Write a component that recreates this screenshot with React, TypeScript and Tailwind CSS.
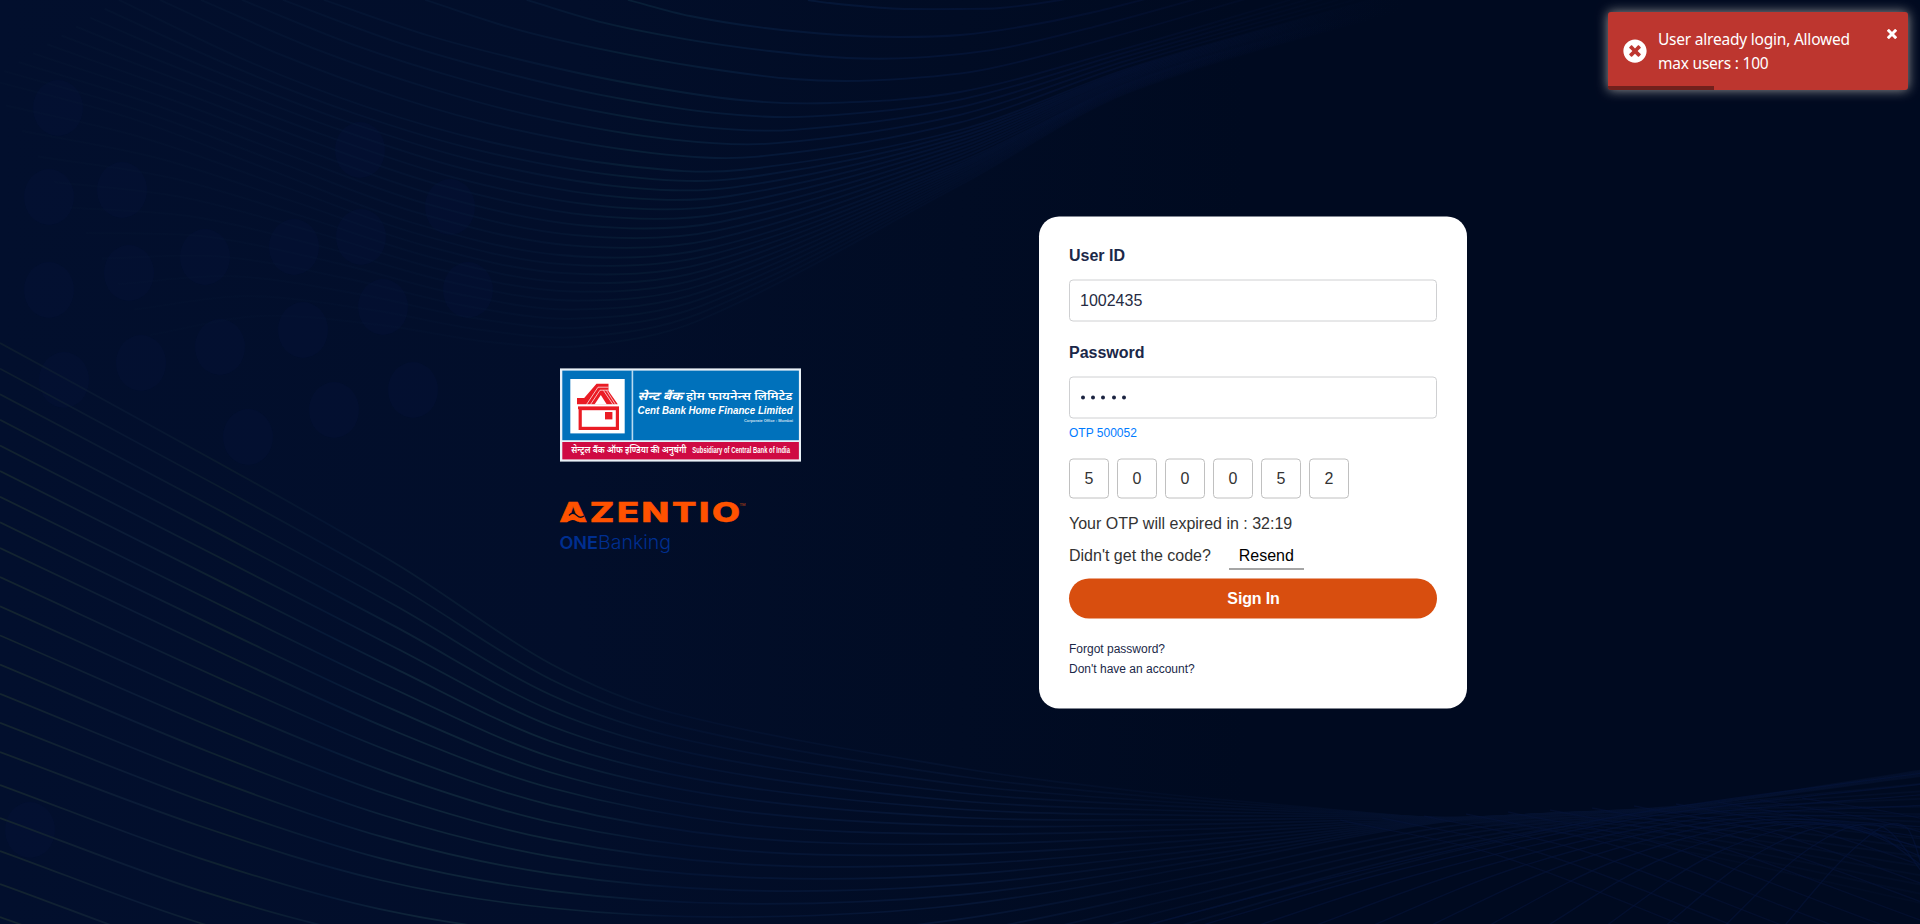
import React from "react";

type Point = [number, number];
type KeyCurve = { at: number; pts: Point[] };

const upperKeys: KeyCurve[] = [
  { at: 0, pts: [[808, 0], [830, 3], [860, 6], [885, 8], [910, 9], [960, 9], [1000, 8], [1060, 0], [1130, -14]] },
  { at: 1, pts: [[628, 0], [690, 16], [765, 28], [840, 35], [900, 37], [960, 35], [1020, 27], [1090, 13], [1180, -10]] },
  { at: 4, pts: [[324, 0], [430, 36], [530, 62], [628, 83], [740, 100], [830, 103], [960, 92], [1120, 50], [1290, 0]] },
  { at: 9, pts: [[119, 0], [245, 60], [367, 107], [490, 142], [628, 166], [740, 170], [960, 130], [1130, 68], [1370, 0]] },
  { at: 18, pts: [[-10, 80], [130, 118], [270, 170], [410, 222], [560, 255], [710, 248], [960, 162], [1130, 82], [1410, 0]] },
  { at: 28, pts: [[150, 335], [260, 316], [380, 325], [490, 342], [582, 346], [700, 320], [960, 185], [1130, 92], [1440, 0]] },
];

const lowerKeys: KeyCurve[] = [
  { at: 0, pts: [[0, 343], [217, 462], [398, 565], [551, 664], [673, 713], [960, 768], [1144, 792], [1400, 816], [1650, 845], [1930, 905]] },
  { at: 8, pts: [[0, 548], [226, 655], [392, 730], [551, 788], [740, 824], [960, 834], [1200, 829], [1450, 818], [1680, 812], [1930, 830]] },
  { at: 15, pts: [[0, 752], [200, 826], [380, 880], [551, 908], [740, 917], [960, 905], [1200, 866], [1450, 821], [1680, 806], [1930, 775]] },
  { at: 21, pts: [[0, 950], [200, 1020], [380, 1055], [551, 1065], [740, 1050], [960, 990], [1200, 920], [1450, 852], [1680, 809], [1930, 769]] },
];

function between(keys: KeyCurve[], i: number): Point[] {
  let k = 0;
  while (k < keys.length - 2 && i > keys[k + 1].at) k++;
  const a = keys[k];
  const b = keys[k + 1];
  const t = (i - a.at) / (b.at - a.at);
  return a.pts.map((p, n) => [p[0] + (b.pts[n][0] - p[0]) * t, p[1] + (b.pts[n][1] - p[1]) * t]);
}

// Hermite spline over points whose x always increases.
function smooth(pts: Point[]): string {
  const slope = pts.map((_, i) => {
    const a = pts[Math.max(0, i - 1)];
    const b = pts[Math.min(pts.length - 1, i + 1)];
    return (b[1] - a[1]) / (b[0] - a[0]);
  });
  let d = `M${pts[0][0]} ${pts[0][1]}`;
  for (let i = 0; i < pts.length - 1; i++) {
    const [x1, y1] = pts[i];
    const [x2, y2] = pts[i + 1];
    const h = (x2 - x1) / 3;
    d += `C${x1 + h} ${y1 + slope[i] * h} ${x2 - h} ${y2 - slope[i + 1] * h} ${x2} ${y2}`;
  }
  return d;
}

const upper = Array.from({ length: 29 }, (_, i) => smooth(between(upperKeys, i)));
const lower = Array.from({ length: 22 }, (_, i) => smooth(between(lowerKeys, i)));
const mesh = Array.from({ length: 12 }, (_, i) =>
  smooth([[1090 + i * 62, 940], [1330 + i * 48, 878 - i * 3], [1620 + i * 26, 816 + i * 1], [1930, 772 + i * 11]]),
);
const meshDown = Array.from({ length: 12 }, (_, i) =>
  smooth([[1340 + i * 42, 820 - i * 2], [1500 + i * 40, 856 - i * 3], [1720 + i * 40, 940 - i * 4]]),
);

const bokeh: Point[] = [
  [58, 108], [49, 197], [49, 290], [122, 190], [129, 273], [205, 257], [141, 363], [220, 347], [303, 330], [383, 307],
  [468, 290], [413, 390], [334, 410], [248, 437], [64, 380], [361, 237], [450, 207], [294, 247], [360, 150], [30, 830],
];

function Backdrop() {
  return (
    <svg className="absolute inset-0 h-full w-full" viewBox="0 0 1920 924" preserveAspectRatio="none" fill="none" aria-hidden="true">
      <defs>
        <linearGradient id="upperLine" gradientUnits="userSpaceOnUse" x1="0" y1="0" x2="1440" y2="0">
          <stop offset="0" stopColor="#0a1d36" stopOpacity="0.25" />
          <stop offset="0.25" stopColor="#071a39" stopOpacity="0.55" />
          <stop offset="0.38" stopColor="#071b39" stopOpacity="0.75" />
          <stop offset="0.44" stopColor="#092138" />
          <stop offset="0.52" stopColor="#061a3a" />
          <stop offset="0.65" stopColor="#05163a" stopOpacity="0.85" />
          <stop offset="0.78" stopColor="#05133a" stopOpacity="0.55" />
          <stop offset="0.98" stopColor="#03102e" stopOpacity="0" />
        </linearGradient>
        <linearGradient id="lowerLine" gradientUnits="userSpaceOnUse" x1="0" y1="0" x2="1920" y2="0">
          <stop offset="0" stopColor="#15262f" />
          <stop offset="0.07" stopColor="#0b1c38" />
          <stop offset="0.12" stopColor="#112430" />
          <stop offset="0.17" stopColor="#071a38" />
          <stop offset="0.21" stopColor="#0f253a" />
          <stop offset="0.29" stopColor="#0e2539" />
          <stop offset="0.35" stopColor="#041434" />
          <stop offset="0.5" stopColor="#071737" />
          <stop offset="0.6" stopColor="#03102c" />
          <stop offset="0.8" stopColor="#04112f" stopOpacity="0.8" />
          <stop offset="1" stopColor="#04112f" stopOpacity="0.6" />
        </linearGradient>
      </defs>
      {bokeh.map(([cx, cy], i) => (
        <ellipse key={i} cx={cx} cy={cy} rx="25" ry="28" fill="#05143a" fillOpacity="0.32" />
      ))}
      <g stroke="url(#upperLine)" strokeWidth="1.8">
        {upper.map((d, i) => (
          <path key={i} d={d} strokeOpacity={i < 8 ? 0.9 : 0.9 - (i - 8) * 0.032} />
        ))}
      </g>
      <g stroke="url(#lowerLine)" strokeWidth="1.7">
        {lower.map((d, i) => (
          <path key={i} d={d} strokeOpacity={i < 5 ? 0.55 + i * 0.08 : 0.95} />
        ))}
      </g>
      <g stroke="#05143a" strokeWidth="1.4" strokeOpacity="0.6">
        {mesh.map((d, i) => <path key={i} d={d} />)}
        {meshDown.map((d, i) => <path key={i} d={d} strokeOpacity="0.5" />)}
      </g>
    </svg>
  );
}

function BankLogo() {
  return (
    <svg className="block h-[94px] w-[241px] overflow-visible" viewBox="0 0 241 94" role="img" aria-label="Cent Bank Home Finance Limited">
      <rect y="0.4" width="241" height="93.2" fill="#e9f1f7" />
      <rect x="2.3" y="2.6" width="236.6" height="69.6" fill="#0071bb" />
      <rect x="2.3" y="74" width="236.6" height="17.4" fill="#cf0a43" />
      <rect x="71.6" y="2" width="1.6" height="71" fill="#b9daf0" />
      <rect x="10.3" y="11" width="54.4" height="54.4" fill="#fff" />
      <path d="M17 36.300V30h7.200L36.500 15.800h12V23l9.300 13.300H17z" fill="#ea1c24" />
      <path d="M26.500 36.500 38 19.200h10.500M30.500 36.500 40 22.200h8.500M43.500 22.500l9.500 14M46.500 22.500l9 14" fill="none" stroke="#fff" strokeWidth="0.7" />
      <path d="M34.500 36.600 40.800 27 46.800 36.600z" fill="#fff" />
      <rect x="20.2" y="40.6" width="37.2" height="19.8" fill="#fff" stroke="#ea1c24" strokeWidth="3.2" />
      <rect x="18" y="38.4" width="41" height="2.8" fill="#ea1c24" />
      <rect x="45" y="44" width="7.4" height="7.4" fill="#ea1c24" />
      <g fill="#fff" style={{ fontFamily: '"Noto Sans Devanagari", "Noto Sans", sans-serif' }}>
        <text x="77.5" y="31.6" fontSize="11.5" fontWeight="700" fontStyle="italic" textLength="45" lengthAdjust="spacingAndGlyphs">सेन्ट बैंक</text>
        <text x="126" y="31.6" fontSize="11.5" fontWeight="600" textLength="106.5" lengthAdjust="spacingAndGlyphs">होम फायनेन्स लिमिटेड</text>
        <text x="11.3" y="85" fontSize="9" fontWeight="600" textLength="115" lengthAdjust="spacingAndGlyphs">सेन्ट्रल बैंक ऑफ इण्डिया की अनुषंगी</text>
      </g>
      <g fill="#fff" style={{ fontFamily: '"Liberation Sans", Arial, sans-serif' }}>
        <text x="77.6" y="46.2" fontSize="10.6" fontWeight="700" fontStyle="italic" textLength="155" lengthAdjust="spacingAndGlyphs">Cent Bank Home Finance Limited</text>
        <text x="184" y="54.4" fontSize="3.8" fontWeight="700" textLength="49" lengthAdjust="spacingAndGlyphs" fillOpacity="0.8">Corporate Office : Mumbai</text>
        <text x="132.3" y="85.2" fontSize="8.2" fontWeight="700" textLength="97.7" lengthAdjust="spacingAndGlyphs">Subsidiary of Central Bank of India</text>
      </g>
    </svg>
  );
}

function AzentioLogo() {
  return (
    <svg className="block h-[56px] w-[194px] overflow-visible" viewBox="0 0 194 56" role="img" aria-label="Azentio ONEBanking">
      <text transform="scale(1.340 1)" x="-0.500" y="20.500" fontSize="27" fontWeight="800" fill="#ff5200" stroke="#ff5200" strokeWidth="0.500" textLength="134.800" lengthAdjust="spacing" style={{ fontFamily: "Inter, sans-serif" }}>AZENTIO</text>
      <path d="M7.500 14.800h14l3.500 6H4.500z" fill="#ff5200" />
      <path d="M9 14.500C11.500 11 14.500 12 17 14.500 19 16.500 22 16.500 24 15" fill="none" stroke="#020d28" strokeWidth="1.300" />
      <path d="M7 21.500c3.500-3 6.500-3.300 9.500-1.300l2 1.300z" fill="#020d28" />
      <text x="179.500" y="4.500" fontSize="4.200" fill="#c94a14" style={{ fontFamily: '"Liberation Sans", sans-serif' }}>TM</text>
      <g fill="#002f90" style={{ fontFamily: "Inter, sans-serif" }}>
        <text x="-0.500" y="48" fontSize="17.800" fontWeight="600" textLength="38.500" lengthAdjust="spacingAndGlyphs">ONE</text>
        <text x="38" y="48" fontSize="18.500" fontWeight="300" textLength="73" lengthAdjust="spacingAndGlyphs">Banking</text>
      </g>
    </svg>
  );
}

function Toast() {
  return (
    <div role="alert" className="absolute top-3 right-3 flex h-[78px] w-[300px] items-center rounded-[3px] bg-[#bd362f] pl-[15px] text-white shadow-[0_0_12px_#999999]">
      <svg className="h-6 w-6 shrink-0" viewBox="0 0 512 512" fill="currentColor" aria-hidden="true">
        <path d="M256 8C119 8 8 119 8 256s111 248 248 248 248-111 248-248S393 8 256 8zm121.600 313.100c4.700 4.700 4.700 12.300 0 17L338 377.600c-4.700 4.700-12.300 4.700-17 0L256 312l-65.100 65.600c-4.700 4.700-12.300 4.700-17 0L134.400 338c-4.700-4.700-4.700-12.300 0-17l65.600-65-65.600-65.100c-4.700-4.700-4.700-12.300 0-17l39.600-39.600c4.700-4.700 12.300-4.700 17 0l65 65.700 65.100-65.600c4.700-4.700 12.300-4.700 17 0l39.600 39.600c4.700 4.700 4.700 12.300 0 17L312 256l65.600 65.100z" />
      </svg>
      <p className="ml-[11px] w-[220px] pb-px font-['Noto_Sans','Open_Sans',sans-serif] text-[15.500px] leading-6 tracking-[-0.220px] text-white">
        User already login, Allowed
        <br />
        max users : 100
      </p>
      <svg className="absolute top-[17px] right-[11px] h-[10px] w-[10px]" viewBox="0 0 10 10" stroke="currentColor" strokeWidth="3" aria-hidden="true">
        <path d="M0.800 0.800 9.200 9.200M9.200 0.800 0.800 9.200" />
      </svg>
      <div className="absolute bottom-0 left-0 h-1 w-[106px] rounded-bl-[3px] bg-black/40" />
    </div>
  );
}

function LoginCard() {
  return (
    <form className="flex h-[492px] w-[428px] translate-y-[0.5px] flex-col rounded-[20px] bg-white px-[30px] pt-[30px] text-[16px] leading-[18px] text-[#1b2848]">
      <label className="font-bold">User ID</label>
      <div className="mt-[15px] flex h-[42px] shrink-0 items-center rounded-[4px] border border-[#cfd0d2] px-[10px] text-[#262b42]">1002435</div>
      <label className="mt-[22px] font-bold">Password</label>
      <div className="mt-[15px] flex h-[42px] shrink-0 items-center gap-[6.200px] rounded-[4px] border border-[#cfd0d2] px-[10.500px]">
        {[0, 1, 2, 3, 4].map((n) => (
          <span key={n} className="h-[4.200px] w-[4.200px] rounded-full bg-[#1b2340]" />
        ))}
      </div>
      <p className="mt-[7px] text-[12px] leading-[14px] text-[#007bff]">OTP 500052</p>
      <div className="mt-[19px] flex gap-2 text-[#333333]">
        {["5", "0", "0", "0", "5", "2"].map((digit, n) => (
          <span key={n} className="flex h-10 w-10 items-center justify-center rounded-[4px] border border-[#c0c0c0]">{digit}</span>
        ))}
      </div>
      <p className="mt-[16px] text-[#333333]">Your OTP will expired in : 32:19</p>
      <div className="mt-[10px] flex h-[28px] items-start text-[#333333]">
        <span className="pt-1">Didn&apos;t get the code?</span>
        <button type="button" className="ml-[18px] h-[27px] w-[75px] border-b border-black/70 pt-0.5 pb-0.5 leading-[18px] text-black">Resend</button>
      </div>
      <button type="button" className="mt-[8px] h-10 shrink-0 rounded-[20px] bg-[#d84e0f] pl-px font-bold tracking-[-0.150px] text-white">Sign In</button>
      <div className="mt-[20px] flex flex-col text-[12px] leading-5 text-[#1b2848]">
        <a>Forgot password?</a>
        <a>Don&apos;t have an account?</a>
      </div>
    </form>
  );
}

export default function App() {
  return (
    <div className="relative h-[924px] w-full overflow-hidden bg-[linear-gradient(90deg,#020f2d_0%,#020e2a_30%,#010c24_50%,#000a20_65%,#000a20_100%)] font-['Liberation_Sans',Arial,sans-serif]">
      <Backdrop />
      <main className="relative flex h-full items-center pl-[560px]">
        <section className="flex w-[479px] flex-col">
          <BankLogo />
          <div className="mt-[39px]">
            <AzentioLogo />
          </div>
        </section>
        <LoginCard />
      </main>
      <Toast />
    </div>
  );
}
